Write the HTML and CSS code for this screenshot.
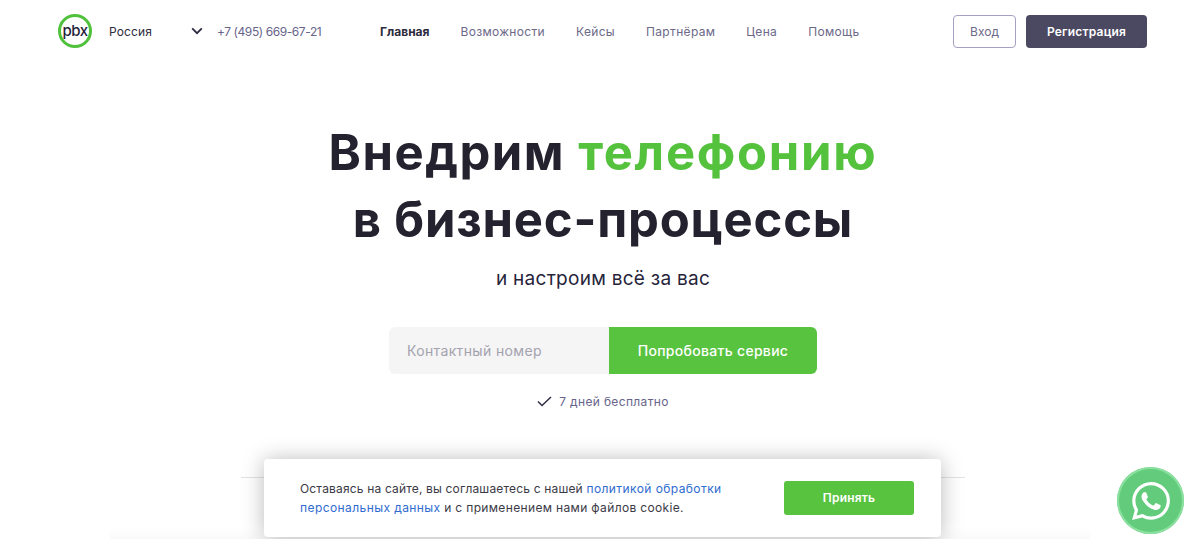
FILE: index.html
```html
<!DOCTYPE html>
<html lang="ru">
<head>
<meta charset="utf-8">
<title>PBX</title>
<link rel="stylesheet" href="styles.css">
</head>
<body>
<header class="header">
  <div class="logo"><span>pbx</span></div>
  <div class="region"><span>Россия</span>
    <svg class="chev" width="12" height="8" viewBox="0 0 12 8"><path d="M1.2 1.4 6 6.2l4.8-4.8" fill="none" stroke="#2a2840" stroke-width="1.8"/></svg>
  </div>
  <div class="phone">+7 (495) 669-67-21</div>
  <nav class="nav">
    <a class="active">Главная</a><a>Возможности</a><a>Кейсы</a><a>Партнёрам</a><a>Цена</a><a>Помощь</a>
  </nav>
  <div class="auth">
    <a class="btn-login">Вход</a>
    <a class="btn-reg">Регистрация</a>
  </div>
</header>
<main class="hero">
  <h1><span class="first">Внедрим <em>телефонию</em></span><br>в бизнес-процессы</h1>
  <p class="sub">и настроим всё за вас</p>
  <form class="form">
    <div class="input">Контактный номер</div>
    <div class="submit">Попробовать сервис</div>
  </form>
  <div class="free">
    <svg width="15" height="11" viewBox="0 0 15 11"><path d="M1 5.5 5 9.5 14 1" fill="none" stroke="#2f2d45" stroke-width="1.5"/></svg>
    <span>7 дней бесплатно</span>
  </div>
  <div class="divider"></div>
</main>
<div class="bottom-fade"></div>
<div class="cookie">
  <p>Оставаясь на сайте, вы соглашаетесь с нашей <a>политикой обработки</a><br><a>персональных данных</a> <span class="rest">и с применением нами файлов cookie.</span></p>
  <div class="accept">Принять</div>
</div>
<div class="wa">
  <svg width="38" height="38" viewBox="0 0 24 24"><path fill="#fff" d="M17.47 14.38c-.3-.15-1.76-.87-2.03-.97-.27-.1-.47-.15-.67.15-.2.3-.77.97-.94 1.16-.17.2-.35.22-.64.08-.3-.15-1.26-.46-2.39-1.47-.88-.79-1.48-1.76-1.65-2.06-.17-.3-.02-.46.13-.6.13-.14.3-.35.45-.52.15-.17.2-.3.3-.5.1-.2.05-.37-.03-.52-.07-.15-.67-1.61-.91-2.2-.24-.58-.49-.5-.67-.51h-.57c-.2 0-.52.07-.79.37-.27.3-1.04 1.02-1.04 2.48s1.07 2.88 1.21 3.07c.15.2 2.1 3.2 5.08 4.49.71.3 1.26.49 1.69.62.71.23 1.36.2 1.87.12.57-.09 1.76-.72 2.01-1.41.25-.7.25-1.29.17-1.41-.07-.13-.27-.2-.57-.35zM12.05 21.8h-.01a9.87 9.87 0 0 1-5.03-1.38l-.36-.21-3.74.98 1-3.65-.24-.37a9.86 9.86 0 0 1-1.51-5.26c0-5.45 4.44-9.88 9.89-9.88 2.64 0 5.12 1.03 6.99 2.9a9.82 9.82 0 0 1 2.89 6.99c0 5.45-4.44 9.88-9.88 9.88zm8.41-18.3A11.82 11.82 0 0 0 12.05 0C5.5 0 .16 5.33.16 11.89c0 2.1.55 4.14 1.59 5.95L.06 24l6.3-1.65a11.88 11.88 0 0 0 5.68 1.45h.01c6.55 0 11.89-5.34 11.89-11.9a11.82 11.82 0 0 0-3.48-8.4z"/></svg>
</div>
</body>
</html>
```
FILE: styles.css
```css
* { box-sizing: border-box; }
html, body { margin: 0; height: 539px; overflow: hidden; background: #fff; }
body { font-family: Inter, "Noto Sans", "Liberation Sans", sans-serif; color: #24222f; position: relative; }

.header { height: 62px; padding: 0 53px 0 58px; display: flex; align-items: center; }
.logo { width: 34px; height: 34px; border: 3px solid #4fc13a; border-radius: 50%; display: flex; align-items: center; justify-content: center; }
.logo span { font-size: 15px; font-weight: 500; letter-spacing: -.5px; color: #26243a; margin-top: -2px; }
.region { width: 94px; margin-left: 17px; display: flex; justify-content: space-between; align-items: center; font-size: 12px; letter-spacing: .15px; color: #2e2c3c; }
.phone { margin-left: 14px; font-size: 12px; letter-spacing: -.42px; color: #67648a; white-space: nowrap; width: 105px; }
.nav { margin-left: 58px; display: flex; gap: 31px; font-size: 12px; letter-spacing: .33px; color: #6c6989; }
.nav .active { font-weight: 700; color: #2d2b3d; letter-spacing: 0; }
.auth { margin-left: auto; display: flex; gap: 10px; align-items: center; }
.btn-login { width: 63px; height: 33px; display: flex; align-items: center; justify-content: center; border: 1.5px solid #a3a0c4; border-radius: 4px; font-size: 12px; color: #6c6989; }
.btn-reg { width: 121px; height: 33px; display: flex; align-items: center; justify-content: center; background: #4b4861; border-radius: 4px; font-size: 12px; font-weight: 600; letter-spacing: .2px; color: #fff; }

.hero { display: flex; flex-direction: column; align-items: center; padding-left: 6px; }
h1 { margin: 57px 0 0; font-size: 49px; line-height: 67px; font-weight: 700; text-align: center; color: #24222f; letter-spacing: .8px; }
h1 .first { letter-spacing: 1.5px; }
h1 em { font-style: normal; color: #55c23e; letter-spacing: 1.7px; }
.sub { margin: 14px 0 0; font-size: 19px; line-height: 24px; letter-spacing: .27px; color: #26243a; }
.form { margin-top: 36px; display: flex; height: 47px; width: 428px; }
.input { width: 220px; background: #f5f5f6; border-radius: 6px 0 0 6px; padding-left: 18px; display: flex; align-items: center; font-size: 14px; letter-spacing: .35px; color: #a3a2ae; }
.submit { flex: 1; background: #58c33f; border-radius: 0 6px 6px 0; display: flex; align-items: center; justify-content: center; font-size: 14px; font-weight: 500; letter-spacing: .3px; color: #fff; }
.free { margin-top: 19px; display: flex; align-items: center; gap: 7px; font-size: 12px; letter-spacing: .35px; color: #67648a; height: 16px; }
.divider { margin-top: 68px; width: 724px; height: 1px; background: #e3e3e6; }

.bottom-fade { position: absolute; left: 110px; right: 110px; top: 527px; height: 12px; background: linear-gradient(to bottom, rgba(0,0,0,0), rgba(0,0,0,.025)); }
.cookie { position: absolute; left: 264px; top: 459px; width: 677px; height: 78px; background: #fff; border-radius: 4px; box-shadow: 0 1px 22px rgba(0,0,0,.28); padding: 0 27px 0 36px; display: flex; align-items: center; justify-content: space-between; }
.cookie p { margin: 0; width: 440px; font-size: 12px; line-height: 19px; letter-spacing: .17px; color: #3b3a46; }
.cookie a { color: #2f6bd0; letter-spacing: .42px; }
.cookie .rest { letter-spacing: .35px; }
.accept { width: 130px; height: 34px; margin-top: -1px; background: #58c33f; border-radius: 3px; display: flex; align-items: center; justify-content: center; color: #fff; font-size: 12px; font-weight: 600; letter-spacing: .2px; }

.wa { position: absolute; left: 1117px; top: 467px; width: 67px; height: 67px; border-radius: 50%; background: #62cc7c; box-shadow: inset 0 0 0 2px #8be09f; display: flex; align-items: center; justify-content: center; }
```
